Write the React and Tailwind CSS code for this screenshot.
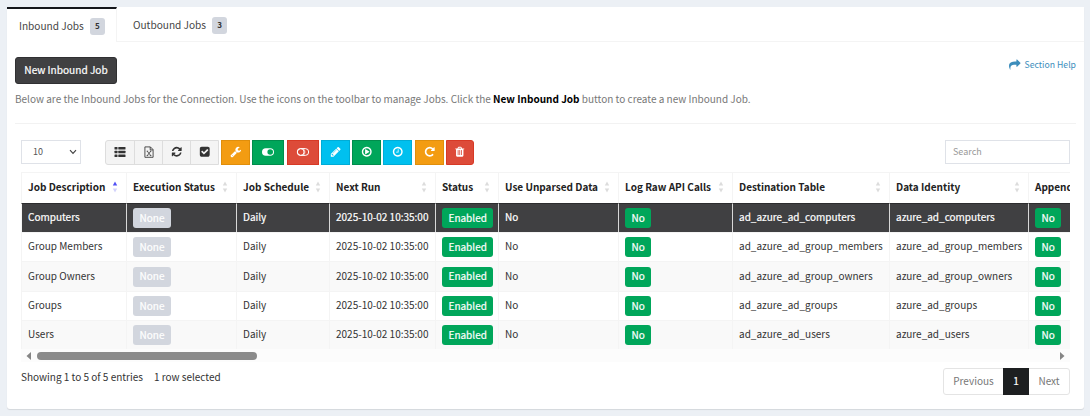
import { useState } from "react";
import clsx from "clsx";

const RING =
  "M1440 896q0-148-73-273t-198-198-273-73-273 73-198 198-73 273 73 273 198 198 273 73 273-73 198-198 73-273zm224 0q0 209-103 385.5t-279.5 279.5-385.5 103-385.5-103-279.5-279.5-103-385.5 103-385.5 279.5-279.5 385.5-103 385.5 103 279.5 279.5 103 385.5z";

const ICONS = {
  share:
    "M1792 640q0 26-19 45l-512 512q-19 19-45 19t-45-19-19-45v-256h-224q-98 0-175.5 6t-154 21.5-133 42.5-105.5 69.5-80 101-48.5 138.5-17.5 181q0 55 5 123 0 6 2.5 23.5t2.5 26.5q0 15-8.5 25t-23.5 10q-16 0-28-17-7-9-13-22t-13.5-30-10.5-24q-127-285-127-451 0-199 53-333 162-403 875-403h224v-256q0-26 19-45t45-19 45 19l512 512q19 19 19 45z",
  refresh:
    "M1639 1056q0 5-1 7-64 268-268 434.5t-478 166.5q-146 0-282.5-55t-243.5-157l-129 129q-19 19-45 19t-45-19-19-45v-448q0-26 19-45t45-19h448q26 0 45 19t19 45-19 45l-137 137q71 66 161 102t187 36q134 0 250-65t186-179q11-17 53-117 8-23 30-23h192q13 0 22.5 9.5t9.5 22.5zm25-800v448q0 26-19 45t-45 19h-448q-26 0-45-19t-19-45 19-45l138-138q-148-137-349-137-134 0-250 65t-186 179q-11 17-53 117-8 23-30 23h-199q-13 0-22.5-9.5t-9.5-22.5v-7q65-268 270-434.5t480-166.5q146 0 284 55.5t245 156.5l130-129q19-19 45-19t45 19 19 45z",
  check:
    "M813 1299l614-614q19-19 19-45t-19-45l-102-102q-19-19-45-19t-45 19l-467 467-211-211q-19-19-45-19t-45 19l-102 102q-19 19-19 45t19 45l358 358q19 19 45 19t45-19zm851-883v960q0 119-84.5 203.5t-203.5 84.5h-960q-119 0-203.5-84.5t-84.5-203.5v-960q0-119 84.5-203.5t203.5-84.5h960q119 0 203.5 84.5t84.5 203.5z",
  wrench:
    "M448 1472q0-26-19-45t-45-19-45 19-19 45 19 45 45 19 45-19 19-45zm644-420l-682 682q-37 37-90 37-52 0-91-37l-106-108q-38-36-38-90 0-53 38-91l681-681q39 98 114.5 173.5t173.5 114.5zm634-435q0 39-23 106-47 134-164.5 217.5t-258.5 83.5q-185 0-316.5-131.5t-131.5-316.5 131.5-316.5 316.5-131.5q58 0 121.5 16.5t107.5 46.5q16 11 16 28t-16 28l-293 169v224l193 107q5-3 79-48.5t135.5-81 70.5-35.5q15 0 23.5 10t8.5 25z",
  pencil:
    "M491 1536l91-91-235-235-91 91v107h128v128h107zm523-928q0-22-22-22-10 0-17 7l-542 542q-7 7-7 17 0 22 22 22 10 0 17-7l542-542q7-7 7-17zm-54-192l416 416-832 832h-416v-416zm683 96q0 53-37 90l-166 166-416-416 166-165q36-38 90-38 53 0 91 38l235 234q37 39 37 91z",
  play: "M1312 896q0 37-32 55l-544 320q-15 9-32 9-16 0-32-8-32-19-32-56v-640q0-37 32-56 33-18 64 1l544 320q32 18 32 55z" + RING,
  clock:
    "M1024 544v448q0 14-9 23t-23 9h-320q-14 0-23-9t-9-23v-64q0-14 9-23t23-9h224v-352q0-14 9-23t23-9h64q14 0 23 9t9 23z" + RING,
  repeat:
    "M1664 256v448q0 26-19 45t-45 19h-448q-42 0-59-40-17-39 14-69l138-138q-148-137-349-137-104 0-198.5 40.5t-163.5 109.5-109.5 163.5-40.5 198.5 40.5 198.5 109.5 163.5 163.5 109.5 198.5 40.5q119 0 225-52t179-147q7-10 23-12 15 0 25 9l137 138q9 8 9.5 20.5t-7.5 22.5q-109 132-264 204.5t-327 72.5q-156 0-298-61t-245-164-164-245-61-298 61-298 164-245 245-164 298-61q147 0 284.5 55.5t244.5 156.5l130-129q29-31 70-14 39 17 39 59z",
  trash:
    "M704 1376v-704q0-14-9-23t-23-9h-64q-14 0-23 9t-9 23v704q0 14 9 23t23 9h64q14 0 23-9t9-23zm256 0v-704q0-14-9-23t-23-9h-64q-14 0-23 9t-9 23v704q0 14 9 23t23 9h64q14 0 23-9t9-23zm256 0v-704q0-14-9-23t-23-9h-64q-14 0-23 9t-9 23v704q0 14 9 23t23 9h64q14 0 23-9t9-23zm-544-992h448l-48-117q-7-9-17-11h-317q-10 2-17 11zm928 32v64q0 14-9 23t-23 9h-96v948q0 83-47 143.5t-113 60.5h-832q-66 0-113-58.5t-47-141.5v-952h-96q-14 0-23-9t-9-23v-64q0-14 9-23t23-9h309l70-167q15-37 54-63t79-26h320q40 0 79 26t54 63l70 167h309q14 0 23 9t9 23z",
};

function Icon({ name }) {
  return (
    <svg viewBox="0 0 1792 1792" className="size-[11.5px] fill-current">
      <path d={ICONS[name]} />
    </svg>
  );
}

function ListIcon() {
  return (
    <svg viewBox="0 0 12 12" className="size-3 fill-current">
      {[1, 4.7, 8.4].map((y) => (
        <g key={y}>
          <rect x="0.5" y={y} width="3" height="2.6" rx="0.5" />
          <rect x="4.3" y={y} width="7.2" height="2.6" rx="0.5" />
        </g>
      ))}
    </svg>
  );
}

function ExcelIcon() {
  return (
    <svg viewBox="0 0 12 12" className="size-3 fill-none stroke-current">
      <path d="M1.9 0.9H7.4L10.1 3.6V11.3H1.9ZM7.2 1V3.9H10" strokeWidth="0.85" />
      <path d="M4.3 5.3L7.7 9.5M7.7 5.3L4.3 9.5M3.7 5.2H5.2M6.8 5.2H8.3M3.7 9.6H5.2M6.8 9.6H8.3" strokeWidth="0.8" />
    </svg>
  );
}

function ToggleIcon({ on }) {
  return (
    <svg viewBox="0 0 14 12" className="h-3 w-3.5">
      {on ? (
        <>
          <rect x="1" y="2.2" width="12" height="7.6" rx="3.8" fill="currentColor" />
          <circle cx="9.2" cy="6" r="2.8" fill="#00a65a" />
        </>
      ) : (
        <g fill="none" stroke="currentColor" strokeWidth="1">
          <rect x="1.3" y="2.6" width="11.4" height="6.8" rx="3.4" />
          <circle cx="4.7" cy="6" r="3.4" />
          <path d="M7.3 2.8a4 4 0 0 1 0 6.4" strokeWidth="0.7" />
        </g>
      )}
    </svg>
  );
}

const plainTools = [
  { id: "columns", icon: <ListIcon /> },
  { id: "excel", icon: <ExcelIcon /> },
  { id: "refresh", icon: <Icon name="refresh" /> },
  { id: "select", icon: <Icon name="check" /> },
];

const colorTools = [
  { id: "edit", cls: "w-[29px] bg-[#f39c12] border-[#e08e0b]", icon: <Icon name="wrench" /> },
  { id: "enable", cls: "w-8 bg-[#00a65a] border-[#008d4c]", icon: <ToggleIcon on /> },
  { id: "disable", cls: "w-8 bg-[#dd4b39] border-[#d73925]", icon: <ToggleIcon /> },
  { id: "rename", cls: "w-[29px] bg-[#00c0ef] border-[#00acd6]", icon: <Icon name="pencil" /> },
  { id: "run", cls: "w-[29px] bg-[#00a65a] border-[#008d4c]", icon: <Icon name="play" /> },
  { id: "schedule", cls: "w-[29px] bg-[#00c0ef] border-[#00acd6]", icon: <Icon name="clock" /> },
  { id: "reset", cls: "w-[29px] bg-[#f39c12] border-[#e08e0b]", icon: <Icon name="repeat" /> },
  { id: "delete", cls: "w-7 bg-[#dd4b39] border-[#d73925] rounded-r-[3px]", icon: <Icon name="trash" /> },
];

const columns = [
  { label: "Job Description", cls: "w-[105px]", sorted: true },
  { label: "Execution Status", cls: "w-[110px]" },
  { label: "Job Schedule", cls: "w-[93px]" },
  { label: "Next Run", cls: "w-[106px]" },
  { label: "Status", cls: "w-[63px]" },
  { label: "Use Unparsed Data", cls: "w-[120px]" },
  { label: "Log Raw API Calls", cls: "w-[114px]" },
  { label: "Destination Table", cls: "w-[157px]" },
  { label: "Data Identity", cls: "w-[139px]" },
  { label: "Append Data", cls: "w-[100px]" },
];

const jobs = [
  { name: "Computers", key: "azure_ad_computers", h: "h-[29px]" },
  { name: "Group Members", key: "azure_ad_group_members", h: "h-[29px]" },
  { name: "Group Owners", key: "azure_ad_group_owners", h: "h-[30px]" },
  { name: "Groups", key: "azure_ad_groups", h: "h-[29px]" },
  { name: "Users", key: "azure_ad_users", h: "h-[29px]" },
];

function Label({ children, muted }) {
  return (
    <span
      className={clsx(
        "inline-flex h-5 items-center rounded-[3px] px-[6.5px] pb-px align-middle text-white [-webkit-text-stroke:0.2px_white]",
        muted ? "bg-[#d2d6de]" : "bg-[#00a65a]"
      )}
    >
      {children}
    </span>
  );
}

function SortArrows({ active }) {
  return (
    <svg viewBox="0 0 6 12" className="h-3 w-1.5 shrink-0">
      <path d="M3 0.5L5.2 4.4H0.8Z" fill={active ? "#5050f5" : "#dcdcdc"} />
      <path d="M3 11.5L5.2 7.6H0.8Z" fill={active ? "#d3d3fb" : "#dcdcdc"} />
    </svg>
  );
}

function Tab({ label, count, active }) {
  return (
    <div
      className={clsx(
        "flex h-[35px] items-center gap-1.5 border-t-2 pl-3",
        active ? "w-[110px] border-t-[#15171b] border-r border-r-[#f4f4f4]" : "border-t-transparent border-b border-b-[#f4f4f4] grow pl-4"
      )}
    >
      <span className="text-[10.1px] text-[#444]">{label}</span>
      <span className="mt-px flex h-[17px] w-[15px] items-center justify-center rounded-[3px] bg-[#d2d6de] pb-px text-[8px] font-bold text-[#333]">
        {count}
      </span>
    </div>
  );
}

export default function App() {
  const [selected] = useState("Computers");

  return (
    <div className="h-[416px] w-[1090px] overflow-hidden bg-[#ecf0f5] px-[7px] pt-[7px] font-['Noto_Sans_CJK_SC',sans-serif] text-[10px] leading-4 text-[#333]">
      <div className="flex h-[402px] w-[1077px] flex-col rounded-b-[3px] bg-white shadow-[0_1px_1px_rgba(0,0,0,0.1)]">
        <div className="flex">
          <Tab label="Inbound Jobs" count={5} active />
          <Tab label="Outbound Jobs" count={3} />
        </div>

        <div className="mx-2 flex h-[82px] flex-col border-b border-[#f2f2f2] pt-[15px]">
          <div className="flex items-start justify-between">
            <button className="h-[27px] w-[102px] rounded-[3px] border border-[#303032] bg-[#404042] pb-0.5 text-[10.1px] text-white [-webkit-text-stroke:0.2px_white]">
              New Inbound Job
            </button>
            <a className="flex items-center gap-1 text-[8.7px] text-[#3c8dbc]">
              <Icon name="share" />
              Section Help
            </a>
          </div>
          <p className="mt-[7px] text-[#777]">
            Below are the Inbound Jobs for the Connection. Use the icons on the toolbar to manage Jobs. Click the{" "}
            <b className="text-black">New Inbound Job</b> button to create a new Inbound Job.
          </p>
        </div>

        <div className="mx-3.5 mt-4 flex items-start">
          <div className="flex h-6 w-[60px] items-center justify-between border border-[#dfe2e8] pl-[11px] pr-[3px] text-[9px] text-[#555]">
            10
            <svg viewBox="0 0 8 6" className="h-1.5 w-2 fill-none stroke-[#444]">
              <path d="M1 1.2L4 4.4L7 1.2" strokeWidth="1.2" />
            </svg>
          </div>
          <div className="ml-6 flex h-[25px] rounded-l-[3px] border border-[#ddd] bg-[#f4f4f4] text-[#333]">
            {plainTools.map((tool, i) => (
              <button key={tool.id} className={clsx("flex w-7 items-center justify-center pb-px", i > 0 && "border-l border-[#ddd]")}>
                {tool.icon}
              </button>
            ))}
          </div>
          <div className="ml-[2px] flex gap-[2.3px]">
            {colorTools.map((tool) => (
              <button key={tool.id} className={clsx("flex h-[25px] items-center justify-center border pb-px text-white", tool.cls)}>
                {tool.icon}
              </button>
            ))}
          </div>
          <input
            placeholder="Search"
            className="ml-auto h-6 w-[125px] border border-[#dfe2e8] px-[7px] pb-px text-[9px] placeholder:text-[#999]"
          />
        </div>

        <div className="mx-3.5 mt-[7px] overflow-hidden">
          <table className="w-[1107px] table-fixed border-separate border-spacing-0">
            <thead>
              <tr className="h-[31px]">
                {columns.map((col) => (
                  <th
                    key={col.label}
                    className={clsx("overflow-hidden border-t border-l border-[#f4f4f4] p-0 pb-0.5 pl-1.5 text-left whitespace-nowrap text-[#222]", col.cls)}
                  >
                    <div className="flex items-center justify-between pr-2">
                      {col.label}
                      <SortArrows active={col.sorted} />
                    </div>
                  </th>
                ))}
              </tr>
            </thead>
            <tbody>
              {jobs.map((job, i) => {
                const cells = [
                  job.name,
                  <Label muted>None</Label>,
                  "Daily",
                  "2025-10-02 10:35:00",
                  <Label>Enabled</Label>,
                  "No",
                  <Label>No</Label>,
                  `ad_${job.key}`,
                  job.key,
                  <Label>No</Label>,
                ];
                const active = job.name === selected;
                return (
                  <tr
                    key={job.name}
                    className={clsx(
                      job.h,
                      active ? "bg-[#404042] text-white [-webkit-text-stroke:0.2px_white]" : i % 2 === 0 && "bg-[#f9f9f9]"
                    )}
                  >
                    {cells.map((cell, c) => (
                      <td
                        key={c}
                        className={clsx(
                          "border-t border-l p-0 pl-1.5 align-middle whitespace-nowrap",
                          typeof cell === "string" && "pb-0.5",
                          active ? "border-t-[#2c2c2e]" : "border-t-[#f4f4f4]",
                          active && c > 0 ? "border-l-[#d8d8d8]" : "border-l-[#f4f4f4]"
                        )}
                      >
                        {cell}
                      </td>
                    ))}
                  </tr>
                );
              })}
            </tbody>
          </table>
          <div className="flex h-[13px] items-center bg-[#fcfcfc] px-[5px]">
            <svg viewBox="0 0 5 8" className="h-2 w-[5px] fill-[#858585]">
              <path d="M5 0V8L0.5 4Z" />
            </svg>
            <div className="ml-1.5 h-2 w-[220px] rounded-full bg-[#8b8b8b]" />
            <svg viewBox="0 0 5 8" className="ml-auto h-2 w-[5px] fill-[#858585]">
              <path d="M0 0V8L4.5 4Z" />
            </svg>
          </div>
        </div>

        <div className="mx-3.5 mt-1.5 flex items-start justify-between">
          <div className="flex gap-[11px] pt-px">
            <span>Showing 1 to 5 of 5 entries</span>
            <span>1 row selected</span>
          </div>
          <div className="flex h-[27px] w-[127px] items-stretch rounded-[3px] border border-[#e4e4e4] text-[#777]">
            <button className="w-[59px] pb-px">Previous</button>
            <button className="-my-px w-[26px] bg-[#1d1f21] pb-px text-white [-webkit-text-stroke:0.2px_white]">1</button>
            <button className="grow pb-px">Next</button>
          </div>
        </div>
      </div>
    </div>
  );
}
